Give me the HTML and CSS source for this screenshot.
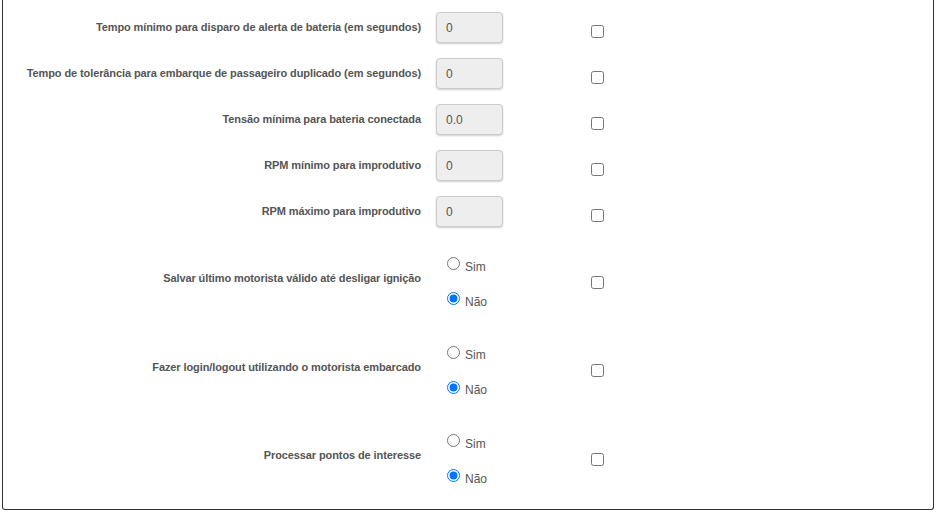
FILE: index.html
```html
<!DOCTYPE html>
<html lang="pt-BR">
<head>
<meta charset="utf-8">
<title>Configurações</title>
<link rel="stylesheet" href="styles.css">
</head>
<body>
<div class="panel">
  <div class="row">
    <label class="lbl">Tempo mínimo para disparo de alerta de bateria (em segundos)</label>
    <div class="field"><input class="inp" type="text" value="0"></div>
    <div class="chk"><input type="checkbox"></div>
  </div>
  <div class="row">
    <label class="lbl">Tempo de tolerância para embarque de passageiro duplicado (em segundos)</label>
    <div class="field"><input class="inp" type="text" value="0"></div>
    <div class="chk"><input type="checkbox"></div>
  </div>
  <div class="row">
    <label class="lbl">Tensão mínima para bateria conectada</label>
    <div class="field"><input class="inp" type="text" value="0.0"></div>
    <div class="chk"><input type="checkbox"></div>
  </div>
  <div class="row">
    <label class="lbl">RPM mínimo para improdutivo</label>
    <div class="field"><input class="inp" type="text" value="0"></div>
    <div class="chk"><input type="checkbox"></div>
  </div>
  <div class="row">
    <label class="lbl">RPM máximo para improdutivo</label>
    <div class="field"><input class="inp" type="text" value="0"></div>
    <div class="chk"><input type="checkbox"></div>
  </div>
  <div class="row tall">
    <label class="lbl">Salvar último motorista válido até desligar ignição</label>
    <div class="field radios">
      <label class="opt"><input type="radio" name="r1"><span>Sim</span></label>
      <label class="opt"><input type="radio" name="r1" checked><span>Não</span></label>
    </div>
    <div class="chk"><input type="checkbox"></div>
  </div>
  <div class="row tall">
    <label class="lbl">Fazer login/logout utilizando o motorista embarcado</label>
    <div class="field radios">
      <label class="opt"><input type="radio" name="r2"><span>Sim</span></label>
      <label class="opt"><input type="radio" name="r2" checked><span>Não</span></label>
    </div>
    <div class="chk"><input type="checkbox"></div>
  </div>
  <div class="row tall">
    <label class="lbl">Processar pontos de interesse</label>
    <div class="field radios">
      <label class="opt"><input type="radio" name="r3"><span>Sim</span></label>
      <label class="opt"><input type="radio" name="r3" checked><span>Não</span></label>
    </div>
    <div class="chk"><input type="checkbox"></div>
  </div>
</div>
</body>
</html>
```

FILE: styles.css
```css
html, body {
  margin: 0;
  padding: 0;
  background: #fff;
}
body {
  font-family: "Liberation Sans", Arial, sans-serif;
  color: #555;
}
.panel {
  margin: 0 3px 2px 2px;
  height: 510px;
  box-sizing: border-box;
  border: 1px solid #333;
  border-top: none;
  border-radius: 0 0 3px 3px;
  padding-top: 5px;
}
.row {
  display: grid;
  grid-template-columns: 433px 155px 40px;
  align-items: center;
  height: 46px;
}
.row.tall {
  height: 88.5px;
}
.lbl {
  text-align: right;
  padding-right: 15px;
  font-family: "Liberation Sans", Arial, sans-serif;
  font-size: 11px;
  letter-spacing: -0.1px;
  font-weight: bold;
  color: #555;
  position: relative;
  top: -1px;
}
.field {
  position: relative;
  top: -1px;
}
.inp {
  box-sizing: border-box;
  width: 67px;
  height: 31px;
  margin: 0;
  padding: 2px 9px 0;
  border: 1px solid #ccc;
  border-radius: 4px;
  background: #eee;
  box-shadow: 0 1px 2px rgba(0, 0, 0, 0.2);
  font-family: "Liberation Sans", Arial, sans-serif;
  font-size: 12px;
  color: #555;
  outline: none;
}
.chk {
  display: flex;
  align-items: center;
  position: relative;
  top: 3px;
}
.chk input {
  margin: 0;
  width: 13px;
  height: 13px;
}
.radios {
  display: flex;
  flex-direction: column;
  gap: 15px;
  padding-left: 11px;
  top: 4px;
}
.opt {
  display: flex;
  align-items: center;
  height: 20px;
  font-size: 12px;
  color: #555;
}
.opt input {
  margin: 0 5px 0 0;
  width: 13px;
  height: 13px;
  position: relative;
  top: -2px;
}
.opt span {
  position: relative;
  top: 1px;
}
```
